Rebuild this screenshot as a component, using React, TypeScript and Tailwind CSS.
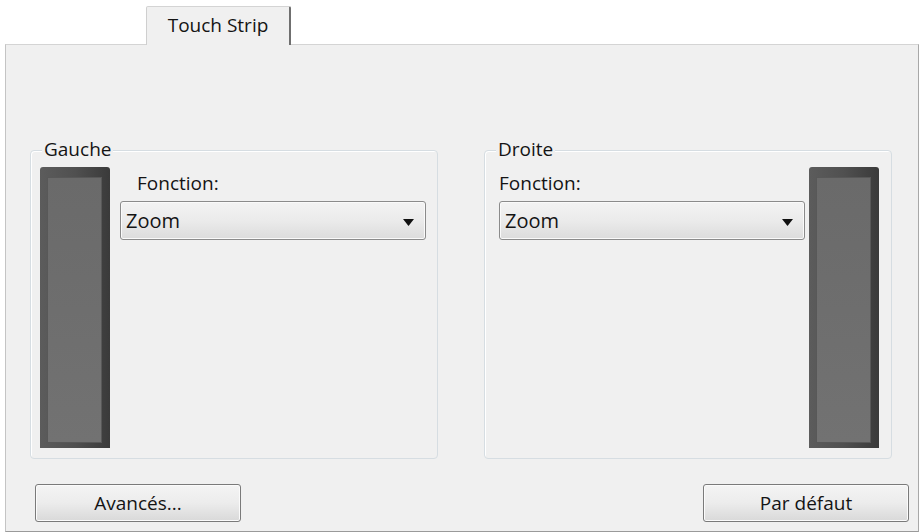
import React from "react";

const font = { fontFamily: '"Open Sans", "Noto Sans", sans-serif' };

function Strip() {
  return (
    <div className="w-[70px] h-[281px] shrink-0 rounded-t-[3px] bg-gradient-to-r from-[#5c5c5c] via-[#505050] to-[#3a3a3a] pt-[10px] pl-[7px] pr-[8px] pb-[5px]">
      <div className="h-full w-full border border-[#585858] bg-gradient-to-b from-[#6a6a6a] to-[#727272]" />
    </div>
  );
}

function Dropdown() {
  return (
    <div className="relative flex h-[39px] w-[306px] items-center rounded-[3px] border border-[#8b8b8b] bg-gradient-to-b from-[#f3f3f3] via-[#ebebeb] to-[#dcdcdc] pl-[5px] text-[20px] text-[#141414] shadow-[inset_0_0_0_1px_#fafafa]">
      <span>Zoom</span>
      <svg className="absolute right-[11px] top-[17px]" width="11" height="7" viewBox="0 0 11 7">
        <path d="M0 0 H11 L5.5 7 Z" fill="#111" />
      </svg>
    </div>
  );
}

function GroupBox({ label, side }: { label: string; side: "left" | "right" }) {
  return (
    <div className="relative h-[309px] w-[408px] rounded-[4px] border border-[#d6dde2] shadow-[inset_1px_1px_0_#ffffff]">
      <span className="absolute -top-[15px] left-[11px] bg-[#f0f0f0] px-[2px] text-[19px] leading-[26px] text-[#141414]">
        {label}
      </span>
      {side === "left" ? (
        <div className="flex pt-[16px] pl-[9px]">
          <Strip />
          <div className="ml-[10px] flex flex-col">
            <span className="ml-[17px] mt-[3px] text-[19px] leading-[26px] text-[#141414]">Fonction:</span>
            <div className="mt-[5px]">
              <Dropdown />
            </div>
          </div>
        </div>
      ) : (
        <div className="flex pt-[16px] pl-[14px]">
          <div className="flex flex-col">
            <span className="mt-[3px] text-[19px] leading-[26px] text-[#141414]">Fonction:</span>
            <div className="mt-[5px]">
              <Dropdown />
            </div>
          </div>
          <div className="ml-[4px]">
            <Strip />
          </div>
        </div>
      )}
    </div>
  );
}

function Button({ children }: { children: React.ReactNode }) {
  return (
    <button className="flex h-[38px] w-[206px] items-center justify-center rounded-[3px] border border-[#7a7a7a] bg-gradient-to-b from-[#f4f4f4] via-[#ececec] to-[#d9d9d9] text-[19px] text-[#141414] shadow-[inset_0_0_0_1px_#fbfbfb]">
      {children}
    </button>
  );
}

export default function App() {
  return (
    <div className="flex h-[532px] w-[921px] flex-col bg-white" style={font}>
      {/* ── Tab row ── */}
      <div className="flex h-[44px] items-end">
        <div className="relative z-10 -mb-px ml-[146px] flex h-[39px] w-[145px] items-start justify-center rounded-t-[2px] border border-b-0 border-l-[#cfcfcf] border-t-[#d4d4d4] border-r-[#6f6f6f] border-r-2 bg-[#f0f0f0] pt-[4px] text-[19px] text-[#141414]">
          Touch Strip
        </div>
      </div>

      {/* ── Panel ── */}
      <div className="ml-[5px] mr-[2px] flex h-[488px] flex-col border border-t-[#d4d4d4] border-l-[#c4c4c4] border-r-[#a8a8a8] border-b-[#9a9a9a] bg-[#f0f0f0]">
        <div className="mt-[105px] flex">
          <div className="ml-[24px]">
            <GroupBox label="Gauche" side="left" />
          </div>
          <div className="ml-[46px]">
            <GroupBox label="Droite" side="right" />
          </div>
        </div>
        <div className="mt-[25px] flex justify-between pl-[29px] pr-[9px]">
          <Button>Avancés...</Button>
          <Button>Par défaut</Button>
        </div>
      </div>
    </div>
  );
}
